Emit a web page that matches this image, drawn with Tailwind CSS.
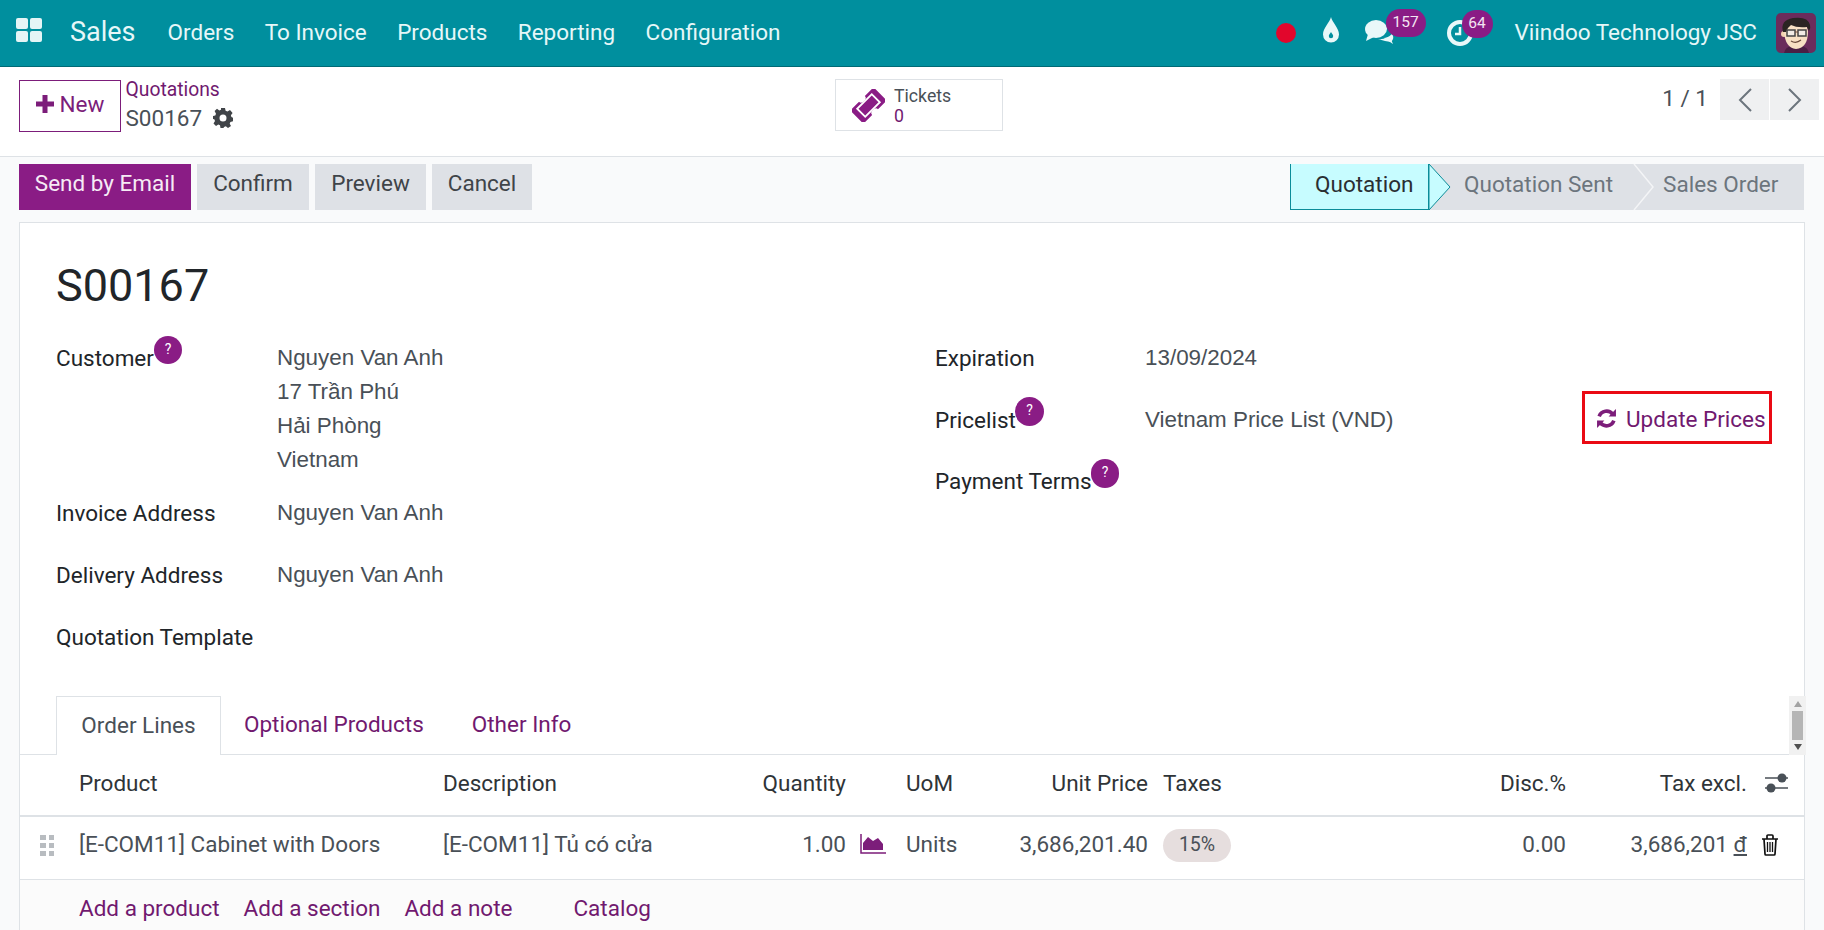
<!DOCTYPE html>
<html lang="en">
<head>
<meta charset="UTF-8" />
<title>S00167 - Sales</title>
<script src="https://cdn.jsdelivr.net/npm/@tailwindcss/browser@4"></script>
</head>
<body class="w-[1824px] h-[930px] overflow-hidden bg-[#f9fafb] text-[22.500px] leading-[34px] text-[#495057] font-['Roboto',sans-serif]">

<!-- top nav -->
<header class="h-[67px] bg-[#008f9e] border-b border-[#006a75] flex items-center text-[#e6f7f8]">
  <svg class="ml-[16px] w-[27px] h-[24px] -mt-[6px]" viewBox="0 0 27 24"><g fill="#e4f5f6"><rect x="0" y="0" width="12" height="11" rx="2"/><rect x="14" y="0" width="12" height="11" rx="2"/><rect x="0" y="13" width="12" height="11" rx="2"/><rect x="14" y="13" width="12" height="11" rx="2"/></g></svg>
  <span class="ml-[27px] text-[27px] pb-[3px]">Sales</span>
  <nav class="ml-[32px] flex gap-[30.400px] pb-[2px]">
    <span>Orders</span><span>To Invoice</span><span>Products</span><span>Reporting</span><span>Configuration</span>
  </nav>
  <div class="ml-auto flex items-center">
    <span class="w-[20px] h-[20px] rounded-full bg-[#e2062c]"></span>
    <svg class="ml-[26px] w-[18px] h-[26px] -mt-[6px]" viewBox="0 0 18 26"><path fill="#e9f8f9" d="M9 0C10 5 17 11 17 17.500A8 8 0 0 1 1 17.500C1 11 8 5 9 0Z"/><path fill="#008f9e" d="M9 15c.6 1.500 2.200 2.700 2.200 4a2.200 2.200 0 0 1-4.400 0c0-1.300 1.600-2.500 2.200-4Z"/></svg>
    <div class="relative ml-[25px] w-[32px] h-[28px]">
      <svg class="absolute left-0 top-0 w-[30px] h-[26px]" viewBox="0 0 30 26"><ellipse cx="11" cy="10" rx="11" ry="9" fill="#e9f8f9"/><path fill="#e9f8f9" d="M3 15 1 22l8-4ZM19 19l9 6-3-7Z"/><path fill="#e9f8f9" d="M13 20q8 1 14-5 3 4-1 8l-6-1Z"/></svg>
      <span class="absolute left-[21px] -top-[10px] w-[40px] h-[28px] rounded-full bg-[#8a1c85] text-[#f3e6f2] text-[15.500px] leading-[26px] text-center">157</span>
    </div>
    <div class="relative ml-[50px] w-[28px] h-[28px]">
      <svg class="w-[28px] h-[28px]" viewBox="0 0 28 28"><circle cx="13" cy="14" r="11" fill="none" stroke="#e9f8f9" stroke-width="4"/><path d="M13 8v7H8" fill="none" stroke="#e9f8f9" stroke-width="2.500"/></svg>
      <span class="absolute left-[15px] -top-[9px] w-[31px] h-[28px] rounded-full bg-[#8a1c85] text-[#f3e6f2] text-[15.500px] leading-[26px] text-center">64</span>
    </div>
    <span class="ml-[40px] pb-[2px]">Viindoo Technology JSC</span>
    <svg class="ml-[19px] mr-[8px] w-[40px] h-[40px] rounded-[5px]" viewBox="0 0 40 40">
      <rect width="40" height="40" fill="#6b2c5c"/>
      <path d="M8 40q1-6 8-7h9q7 1 8 7Z" fill="#4a1f44"/>
      <circle cx="8" cy="21" r="3" fill="#f2d2b0"/>
      <path d="M8 18q0-9 13-9 10 0 11 9 0 17-12 18-11-1-12-18Z" fill="#f7e0c4"/>
      <path d="M7 19Q4 7 17 5q15-2 17 7 1 3-1 6l-2-4q-10 1-16-2-3 2-5 7Z" fill="#2a2423"/>
      <rect x="11" y="17" width="8" height="6" fill="#f1ece6" stroke="#444" stroke-width="1.500"/>
      <rect x="22" y="17" width="8" height="6" fill="#f1ece6" stroke="#444" stroke-width="1.500"/>
      <path d="M19 19h3M15 28q5 3 10-1" fill="none" stroke="#6a4a3c" stroke-width="1.200"/>
    </svg>
  </div>
</header>

<!-- control panel -->
<section class="h-[90px] bg-white border-b border-[#dee2e6] relative flex pl-[19px]">
  <div class="w-[816px] shrink-0 flex items-start pt-[13px]">
    <button class="h-[52px] w-[102px] pb-[5px] border border-[#7c1d7a] text-[#7c1d7a] flex items-center justify-center gap-[6px]">
      <svg class="w-[18px] h-[18px]" viewBox="0 0 18 18"><path fill="#7c1d7a" d="M6.500 0h5v6.500H18v5h-6.500V18h-5v-6.500H0v-5h6.500Z"/></svg>
      <span>New</span>
    </button>
    <div class="ml-[4.500px] -mt-[6px]">
      <div class="text-[#71196f] text-[19.300px] leading-[32px]">Quotations</div>
      <div class="flex items-center leading-[28px] -mt-[2px]">S00167
        <svg class="ml-[11px] w-[20px] h-[20px]" viewBox="0 0 20 20"><path fill="#404448" fill-rule="evenodd" d="M8 0h4l.6 2.800 1.800.8L17 2l2.600 3-1.700 2.300.5 1.700L20 9.700v3.600l-2.600.6-.7 1.800L18 18l-3 2-2.200-1.700-1.800.7L10.500 20h-3L7 17.300l-1.700-.8L3 18l-2.500-2.600L2 13l-.7-1.700L0 11V8l2.300-.5.700-1.800L1.600 3 4 .8l2.300 1.600L8 1.700ZM10 6.500a3.500 3.500 0 1 0 0 7 3.500 3.500 0 0 0 0-7Z"/></svg>
      </div>
    </div>
  </div>
  <div class="mt-[12px] w-[168px] h-[52px] border border-[#dee2e6] flex items-center">
    <svg class="ml-[16px] w-[33px] h-[33px]" viewBox="0 0 32 32"><g transform="rotate(-45 16 16)"><path fill="#8a1c85" d="M0 7h12a4 3 0 0 0 8 0h12v18H20a4 3 0 0 0-8 0H0Z"/><rect x="6" y="10.500" width="20" height="11" fill="#8a1c85" stroke="#fff" stroke-width="1.800"/></g></svg>
    <div class="ml-[9px] leading-[20px] pt-[1px]">
      <div class="text-[17.700px] text-[#495057]">Tickets</div>
      <div class="text-[17.700px] text-[#71196f]">0</div>
    </div>
  </div>
  <div class="absolute right-[5px] top-[12px] flex items-center">
    <span class="mr-[12px] pb-[4px]">1 / 1</span>
    <div class="w-[50px] h-[41px] bg-[#eff0f1] flex items-center justify-center border-r border-white"><svg class="w-[16px] h-[26px]" viewBox="0 0 16 26"><path d="M14 2 3 13l11 11" fill="none" stroke="#6c757d" stroke-width="2"/></svg></div>
    <div class="w-[49px] h-[41px] bg-[#eff0f1] flex items-center justify-center"><svg class="w-[16px] h-[26px]" viewBox="0 0 16 26"><path d="M2 2l11 11L2 24" fill="none" stroke="#6c757d" stroke-width="2"/></svg></div>
  </div>
</section>

<!-- action bar -->
<section class="h-[65px] flex items-start pt-[7px] pl-[19px] pr-[20px]">
  <div class="flex gap-[6px] text-[#3f4449]">
    <button class="h-[46px] w-[172px] pb-[8px] bg-[#8a1c85] text-[#f6ebf5]">Send by Email</button>
    <button class="h-[46px] w-[112px] pb-[8px] bg-[#dee1e6]">Confirm</button>
    <button class="h-[46px] w-[111px] pb-[8px] bg-[#dee1e6]">Preview</button>
    <button class="h-[46px] w-[100px] pb-[8px] bg-[#dee1e6]">Cancel</button>
  </div>
  <div class="ml-auto h-[46px] flex relative">
    <div class="w-[140px] h-[46px] pb-[6px] bg-[#c7fcff] border border-r-0 border-t-0 border-[#0b8c99] pl-[24px] flex items-center text-[#2a2e32]">Quotation<span class="absolute left-[138px] top-0 h-[46px] w-px bg-[#0b8c99]"></span></div>
    <svg class="absolute left-[138px] top-0 w-[24px] h-[46px]" viewBox="0 0 24 46"><path d="M1 0 22 23 1 46Z" fill="#c7fcff" stroke="#0b8c99"/></svg>
    <div class="w-[374px] h-[46px] pb-[6px] bg-[#dee1e6] flex items-center text-[#6c757d]"><span class="ml-[34px]">Quotation Sent</span><span class="ml-[50px]">Sales Order</span></div>
    <svg class="absolute left-[343px] top-0 w-[24px] h-[46px]" viewBox="0 0 24 46"><path d="M1 0 20 23 1 46" fill="none" stroke="#f4f5f7" stroke-width="1.500"/></svg>
  </div>
</section>

<!-- form sheet -->
<main class="mx-[19px] h-[708px] bg-white border-x border-t border-[#dee2e6] relative">
  <div class="px-[36px]">
    <h1 class="pt-[33px] text-[45px] leading-[60px] text-[#212529]">S00167</h1>
    <div class="mt-[25px] grid grid-cols-[879px_1fr]">
      <div>
        <div class="grid grid-cols-[221px_1fr]">
          <div class="relative text-[#212529] w-fit">Customer<span class="absolute left-[98px] -top-[5px] w-[28px] h-[28px] rounded-full bg-[#8a1c85] text-white text-[14px] leading-[26px] text-center">?</span></div>
          <div class="font-['Liberation_Sans',sans-serif] text-[22.400px]">Nguyen Van Anh<br>17 Trần Phú<br>Hải Phòng<br>Vietnam</div>
        </div>
        <div class="mt-[19px] grid grid-cols-[221px_1fr] gap-y-[28px]">
          <div class="text-[#212529]">Invoice Address</div><div class="font-['Liberation_Sans',sans-serif] text-[22.400px]">Nguyen Van Anh</div>
          <div class="text-[#212529]">Delivery Address</div><div class="font-['Liberation_Sans',sans-serif] text-[22.400px]">Nguyen Van Anh</div>
          <div class="text-[#212529]">Quotation Template</div><div></div>
        </div>
      </div>
      <div class="grid grid-cols-[210px_1fr] content-start">
        <div class="text-[#212529]">Expiration</div><div class="font-['Liberation_Sans',sans-serif] text-[22.400px]">13/09/2024</div>
        <div class="relative text-[#212529] mt-[28px] w-fit">Pricelist<span class="absolute left-[80px] -top-[6px] w-[29px] h-[29px] rounded-full bg-[#8a1c85] text-white text-[14px] leading-[27px] text-center">?</span></div>
        <div class="mt-[28px] relative font-['Liberation_Sans',sans-serif] text-[22.400px]">Vietnam Price List (VND)
          <div class="absolute left-[437px] -top-[12px] w-[190px] h-[53px] pt-[2px] border-[3px] border-[#ea0a14] flex items-center pl-[11px] text-[#71196f] gap-[9px] whitespace-nowrap font-['Roboto',sans-serif] text-[22.500px]">
            <svg class="w-[21px] h-[21px] shrink-0" viewBox="0 0 20 20"><path fill="none" stroke="#7c1d7a" stroke-width="3.500" d="M3 8a7.500 7.500 0 0 1 13-2M17 12a7.500 7.500 0 0 1-13 2"/><path fill="#7c1d7a" d="M19 1v7h-7ZM1 19v-7h7Z"/></svg>
            <span>Update Prices</span>
          </div>
        </div>
        <div class="relative text-[#212529] mt-[27px] w-fit">Payment Terms<span class="absolute left-[156px] -top-[5px] w-[28px] h-[29px] rounded-full bg-[#8a1c85] text-white text-[14px] leading-[27px] text-center">?</span></div><div></div>
      </div>
    </div>
  </div>

  <!-- tabs -->
  <div class="absolute left-0 right-0 top-[473px] h-[59px] border-b border-[#dee2e6] flex pl-[36px]">
    <div class="w-[165px] h-[59px] pb-[2px] bg-white border border-b-0 border-[#dee2e6] flex items-center justify-center">Order Lines</div>
    <div class="ml-[23px] pb-[2px] flex items-center text-[#71196f]">Optional Products</div>
    <div class="ml-[48px] pb-[2px] flex items-center text-[#71196f]">Other Info</div>
    <div class="absolute right-[-2px] top-0 w-[17px] h-[59px] bg-[#f1f1f1] flex flex-col items-center justify-between py-[5px]">
      <span class="w-0 h-0 border-x-[4px] border-x-transparent border-b-[6px] border-b-[#a3a3a3]"></span>
      <span class="w-[11px] h-[29px] bg-[#b5b5b5]"></span>
      <span class="w-0 h-0 border-x-[4px] border-x-transparent border-t-[6px] border-t-[#505050]"></span>
    </div>
  </div>

  <!-- order lines -->
  <div class="absolute left-0 right-0 top-[532px]">
    <div class="h-[62px] pb-[4px] border-b-2 border-[#dee2e6] grid grid-cols-[59px_364px_403px_60px_94px_148px_251px_167px_181px_1fr] items-center text-[#2f3438]">
      <span></span><span>Product</span>
      <span class="flex justify-between"><span>Description</span><span>Quantity</span></span>
      <span></span><span>UoM</span><span class="text-right">Unit Price</span><span class="pl-[15px]">Taxes</span><span class="text-right">Disc.%</span><span class="text-right">Tax excl.</span>
      <svg class="ml-[18px] w-[23px] h-[20px]" viewBox="0 0 23 20"><path d="M0 5h23M0 15h23" stroke="#495057" stroke-width="1.500"/><circle cx="17" cy="5" r="4.500" fill="#495057"/><circle cx="6" cy="15" r="4.500" fill="#495057"/></svg>
    </div>
    <div class="h-[63px] pb-[8px] border-b border-[#dee2e6] grid grid-cols-[59px_364px_403px_60px_94px_148px_251px_167px_181px_1fr] items-center">
      <div class="ml-[20px] grid grid-cols-2 gap-[3px] w-[14px] mt-[2px]"><i class="h-[5px] bg-[#b8bcc0]"></i><i class="h-[5px] bg-[#b8bcc0]"></i><i class="h-[5px] bg-[#b8bcc0]"></i><i class="h-[5px] bg-[#b8bcc0]"></i><i class="h-[5px] bg-[#b8bcc0]"></i><i class="h-[5px] bg-[#b8bcc0]"></i></div>
      <span>[E-COM11] Cabinet with Doors</span>
      <span class="flex justify-between"><span>[E-COM11] Tủ có cửa</span><span>1.00</span></span>
      <svg class="ml-[14px] w-[26px] h-[20px]" viewBox="0 0 26 20"><path fill="none" stroke="#7c1d7a" stroke-width="1.500" d="M1 0v19h25"/><path fill="#7c1d7a" d="M3 16V9l5-6 5 4 5-3 5 6v6Z"/></svg>
      <span>Units</span><span class="text-right">3,686,201.40</span>
      <span class="pl-[15px]"><span class="inline-flex w-[68px] h-[33px] rounded-full bg-[#e6dede] items-center justify-center text-[19.500px]">15%</span></span>
      <span class="text-right">0.00</span>
      <span class="text-right">3,686,201 <u>đ</u></span>
      <svg class="ml-[14px] w-[18px] h-[22px] mt-[2px]" viewBox="0 0 18 22"><path fill="none" stroke="#111" stroke-width="1.700" d="M1 5h16M3 5l1 15q0 1 1 1h8q1 0 1-1l1-15M6 5V2q0-1 1-1h4q1 0 1 1v3"/><path stroke="#111" stroke-width="1.300" d="M6.500 8v10M9 8v10M11.500 8v10"/></svg>
    </div>
    <div class="h-[70px] bg-[#fbfbfb] flex gap-[24px] pl-[59px] pt-[11px] text-[#71196f]">
      <span>Add a product</span><span>Add a section</span><span>Add a note</span><span class="ml-[37px]">Catalog</span>
    </div>
  </div>
</main>
</body>
</html>
